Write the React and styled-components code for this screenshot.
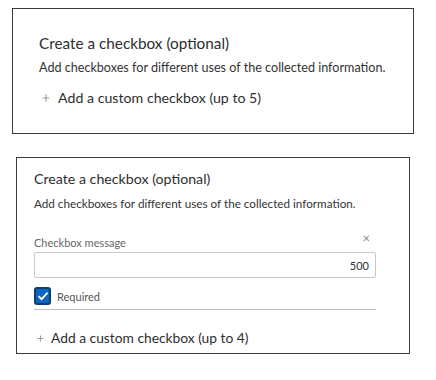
import React from 'react'
import styled, { createGlobalStyle } from 'styled-components'

const GlobalStyle = createGlobalStyle`
  body {
    margin: 0;
    background: #fff;
    font-family: Lato, "Open Sans", sans-serif;
    color: #2b2b2b;
  }
`

const Page = styled.div`
  width: 436px;
  height: 380px;
  padding-top: 8px;
  box-sizing: border-box;
`

const Card = styled.section`
  box-sizing: border-box;
  margin-left: ${p => p.left}px;
  width: ${p => p.width}px;
  height: ${p => p.height}px;
  margin-bottom: ${p => p.gap || 0}px;
  padding: ${p => p.pad};
  border: 1.5px solid #3a3a3a;
  display: flex;
  flex-direction: column;

  & > * {
    flex-shrink: 0;
  }
`

const Title = styled.h2`
  margin: 0;
  font-weight: 400;
  font-size: ${p => p.size}px;
  line-height: 20px;
  color: #2e2e2e;
`

const Desc = styled.p`
  margin: ${p => p.mt}px 0 0;
  font-size: ${p => p.size}px;
  line-height: 18px;
  color: #333;
  white-space: nowrap;
`

const AddLink = styled.div`
  margin-top: ${p => p.mt}px;
  display: flex;
  align-items: center;
  gap: ${p => p.gap}px;
  font-size: ${p => p.size}px;
  line-height: 20px;
  color: #2e2e2e;
  padding-left: 3px;
`

const FieldHead = styled.div`
  margin-top: 20px;
  display: flex;
  justify-content: space-between;
  align-items: flex-end;
`

const Label = styled.label`
  font-size: 11px;
  line-height: 14px;
  color: #666;
`

const Close = styled.span`
  font-size: 13px;
  line-height: 12px;
  color: #8a8a8a;
  margin-right: 6px;
  margin-bottom: 6px;
`

const Input = styled.div`
  margin-top: 2px;
  height: 26px;
  box-sizing: border-box;
  border: 1px solid #c8c8c8;
  border-radius: 2px;
  display: flex;
  align-items: center;
  justify-content: flex-end;
  padding-right: 6px;
  font-size: 11px;
  color: #333;
`

const CheckRow = styled.div`
  margin-top: 9px;
  display: flex;
  align-items: center;
  gap: 6px;
  padding-bottom: 4px;
  border-bottom: 1.5px solid #bdbdbd;
`

const Box = styled.span`
  width: 17px;
  height: 18px;
  box-sizing: border-box;
  border: 2px solid #0b3f72;
  border-radius: 3px;
  background: #0a66c2;
  display: flex;
  align-items: center;
  justify-content: center;
`

const CheckText = styled.span`
  font-size: 11px;
  color: #555;
`

function PlusIcon({ size }) {
  return (
    <svg width={size} height={size} viewBox="0 0 8 8">
      <path d="M4 0.5 V7.5 M0.5 4 H7.5" stroke="#9c9c9c" strokeWidth="1.2" fill="none" />
    </svg>
  )
}

export default function App() {
  return (
    <Page>
      <GlobalStyle />
      <Card left={12} width={402} height={126} pad="24px 0 0 26px" gap={23}>
        <Title size={15.3}>Create a checkbox (optional)</Title>
        <Desc size={12.6} mt={6}>Add checkboxes for different uses of the collected information.</Desc>
        <AddLink size={14.2} mt={11} gap={8}>
          <PlusIcon size={8} />
          Add a custom checkbox (up to 5)
        </AddLink>
      </Card>
      <Card left={16} width={394} height={197} pad="11px 33px 0 17px">
        <Title size={14.2}>Create a checkbox (optional)</Title>
        <Desc size={11.7} mt={5}>Add checkboxes for different uses of the collected information.</Desc>
        <FieldHead>
          <Label>Checkbox message</Label>
          <Close>×</Close>
        </FieldHead>
        <Input>500</Input>
        <CheckRow>
          <Box>
            <svg width="12" height="10" viewBox="0 0 12 10">
              <path d="M1.5 5.2 L4.6 8.2 L10.6 1.6" fill="none" stroke="#fff" strokeWidth="1.8" />
            </svg>
          </Box>
          <CheckText>Required</CheckText>
        </CheckRow>
        <AddLink size={13.8} mt={18} gap={7}>
          <PlusIcon size={7} />
          Add a custom checkbox (up to 4)
        </AddLink>
      </Card>
    </Page>
  )
}
